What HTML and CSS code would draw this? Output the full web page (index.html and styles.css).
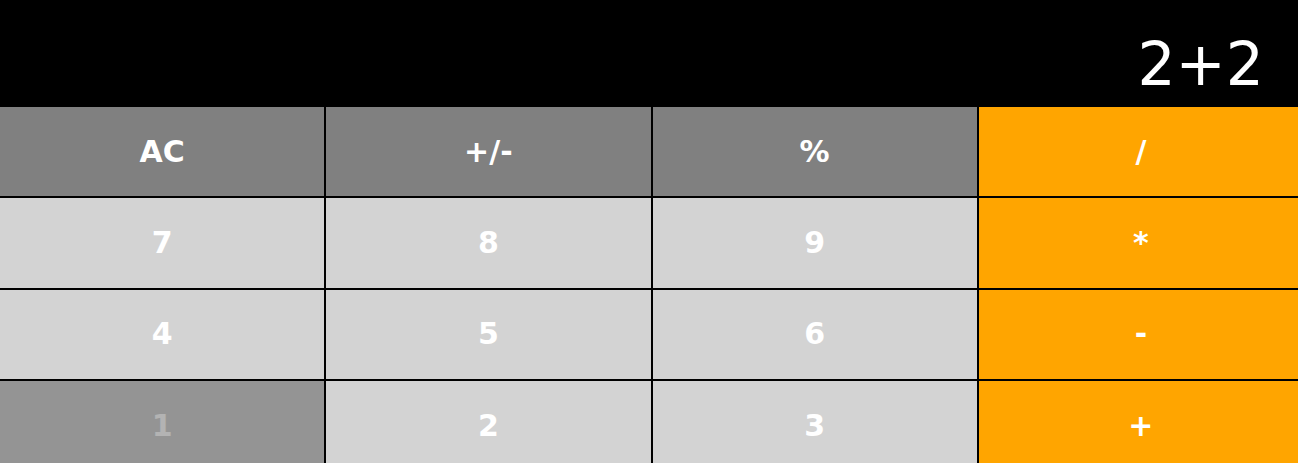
FILE: index.html
```html
<!DOCTYPE html>
<html lang="en">
<head>
<meta charset="utf-8">
<title>Calculator</title>
<link rel="stylesheet" href="styles.css">
</head>
<body>
<div class="calculator">
  <div class="display">2+2</div>
  <div class="keys">
    <button class="key fn">AC</button>
    <button class="key fn">+/-</button>
    <button class="key fn">%</button>
    <button class="key op">/</button>
    <button class="key num">7</button>
    <button class="key num">8</button>
    <button class="key num">9</button>
    <button class="key op">*</button>
    <button class="key num">4</button>
    <button class="key num">5</button>
    <button class="key num">6</button>
    <button class="key op">-</button>
    <button class="key num active">1</button>
    <button class="key num">2</button>
    <button class="key num">3</button>
    <button class="key op">+</button>
  </div>
</div>
</body>
</html>
```
FILE: styles.css
```css
html, body {
  margin: 0;
  padding: 0;
  background: #000;
  overflow: hidden;
}
body {
  font-family: "DejaVu Sans", sans-serif;
}
.calculator {
  width: 100%;
}
.display {
  box-sizing: border-box;
  height: 106px;
  padding: 29px 34px 0 0;
  text-align: right;
  color: #fff;
  font-size: 60px;
  line-height: 70px;
}
.keys {
  display: flex;
  flex-wrap: wrap;
  width: calc(100% + 8px);
  margin-left: -1px;
}
.key {
  box-sizing: border-box;
  flex: 0 0 calc(25% - 0.25px);
  height: 91.34px;
  margin: 0;
  padding: 0;
  border: 1px solid #000;
  color: #fff;
  font-family: "DejaVu Sans", sans-serif;
  font-weight: bold;
  font-size: 30px;
  line-height: 1;
  cursor: pointer;
}
.fn { background: #808080; }
.num { background: #d3d3d3; }
.op { background: #ffa500; }
.active { opacity: 0.7; }
```
